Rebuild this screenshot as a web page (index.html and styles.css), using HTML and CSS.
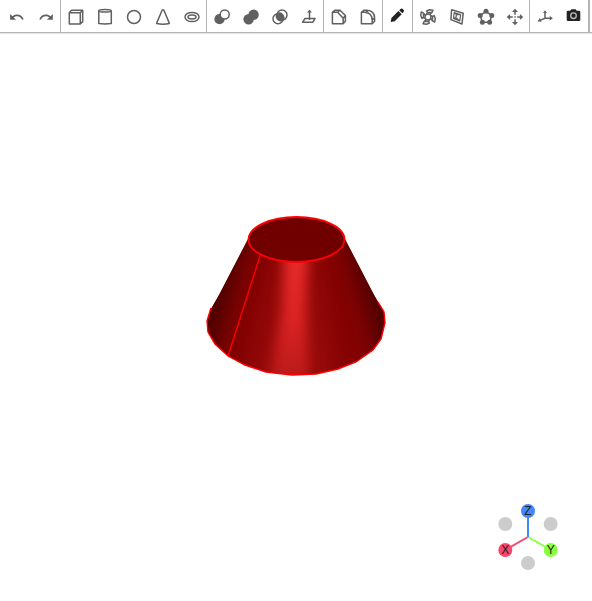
FILE: index.html
```html
<!DOCTYPE html>
<html lang="en">
<head>
<meta charset="utf-8">
<title>Solid modeler</title>
<link rel="stylesheet" href="styles.css">
</head>
<body>
<header class="toolbar" role="toolbar" aria-label="Modeling tools">
  <div class="group">
    <button class="tool" type="button" aria-label="Undo"><svg viewBox="0 0 29 32"><path class="solid" transform="translate(6.8 9.3) scale(.66)" d="M12.5 8c-2.65 0-5.05.99-6.9 2.6L2 7v9h9l-3.62-3.62c1.39-1.16 3.16-1.88 5.12-1.88 3.54 0 6.55 2.31 7.6 5.5l2.37-.78C21.08 11.03 17.15 8 12.5 8z"/></svg></button>
    <button class="tool" type="button" aria-label="Redo"><svg viewBox="0 0 29 32"><path class="solid" transform="translate(7.3 9.3) scale(.66)" d="M18.4 10.6C16.55 8.99 14.15 8 11.5 8c-4.65 0-8.58 3.03-9.96 7.22L3.9 16c1.05-3.19 4.05-5.5 7.6-5.5 1.95 0 3.73.72 5.12 1.88L13 16h9V7l-3.6 3.6z"/></svg></button>
  </div>
  <div class="group">
    <button class="tool" type="button" aria-label="Box"><svg viewBox="0 0 29 32"><path class="line" d="M8.3 12.7H19.3V24H8.3ZM8.3 12.7 10.5 10.3H21.7V21.6L19.3 24M19.3 12.7 21.7 10.3"/></svg></button>
    <button class="tool" type="button" aria-label="Cylinder"><svg viewBox="0 0 29 32"><path class="line" d="M8.8 10.8V23.6Q15 24.4 21.3 23.6V10.8"/><ellipse class="line" cx="15" cy="10.8" rx="6.3" ry="1.3"/></svg></button>
    <button class="tool" type="button" aria-label="Sphere"><svg viewBox="0 0 29 32"><circle class="line" cx="15" cy="17" r="6.5"/></svg></button>
    <button class="tool" type="button" aria-label="Cone"><svg viewBox="0 0 29 32"><path class="line" d="M14.2 10h1.6L21.4 23.4Q15 25 8.6 23.4Z"/></svg></button>
    <button class="tool" type="button" aria-label="Torus"><svg viewBox="0 0 29 32"><ellipse class="line" cx="15" cy="17" rx="7" ry="4.6"/><ellipse class="line" cx="15" cy="17" rx="4" ry="1.9"/></svg></button>
  </div>
  <div class="group">
    <button class="tool" type="button" aria-label="Subtract"><svg viewBox="0 0 29 32"><circle class="solid" cx="12.5" cy="19.2" r="5.1"/><circle class="line white" cx="17.7" cy="14.5" r="4.5"/></svg></button>
    <button class="tool" type="button" aria-label="Union"><svg viewBox="0 0 29 32"><circle class="solid" cx="12.6" cy="19.2" r="5.2"/><circle class="solid" cx="17.6" cy="14.7" r="5.2"/></svg></button>
    <button class="tool" type="button" aria-label="Intersect"><svg viewBox="0 0 29 32"><path class="solid" d="M12.1 13A5 5 0 0 1 18.1 20.8A5 5 0 0 1 12.1 13Z"/><circle class="line" cx="13" cy="18.8" r="5"/><circle class="line" cx="17" cy="15.1" r="5"/></svg></button>
    <button class="tool" type="button" aria-label="Extrude"><svg viewBox="0 0 29 32"><path class="line" d="M11 18.5H21L18.7 22.3H8.5ZM15.5 20V12"/><path class="solid" d="m13.1 12.5 2.4-3 2.4 3z"/></svg></button>
  </div>
  <div class="group">
    <button class="tool" type="button" aria-label="Chamfer"><svg viewBox="0 0 29 32"><path class="line" d="M8.4 12.3h5.2l5.6 6v5.5H8.4ZM8.4 12.3l2.6-2.1h5l5.4 5.3v5.8l-2.2 2.5M13.6 12.3l2.4-2.1M19.2 18.3l2.2-2.8"/></svg></button>
    <button class="tool" type="button" aria-label="Fillet"><svg viewBox="0 0 29 32"><path class="line" d="M8.4 12.3h3.4q7.4.6 7.4 8v3.5H8.4ZM8.4 12.3l2.6-2.1h3q7.6.4 7.6 8v3.1l-2.4 2.5M12.8 12.3l2.4-2M19.2 20l2.4-2"/></svg></button>
  </div>
  <div class="group">
    <button class="tool" type="button" aria-label="Sketch"><svg viewBox="0 0 29 32"><path class="dark" d="m7.7 22 .7-4 7-7 3.3 3.3-7 7ZM16.2 10.2 17.8 8.8q.8-.7 1.6 0l1.3 1.3q.7.8 0 1.6l-1.4 1.5Z"/></svg></button>
  </div>
  <div class="group">
    <button class="tool" type="button" aria-label="Revolve"><svg viewBox="0 0 29 32"><circle class="line" cx="15" cy="17" r="3"/><g id="blade"><path class="line" d="M13.6 14.2 14.5 12.4 13.6 10.9 16.5 9.8 20 10.2 18.8 12.6 16.8 14.2M14.5 12.4 18.8 12.6"/></g><use href="#blade" transform="rotate(90 15 17)"/><use href="#blade" transform="rotate(180 15 17)"/><use href="#blade" transform="rotate(270 15 17)"/></svg></button>
    <button class="tool" type="button" aria-label="Offset"><svg viewBox="0 0 29 32"><path class="line" d="M9.6 9.8 21.2 13.2 20 24 8.9 19.6Z"/><path class="line thin" d="M12.2 12.6 18.7 14.7 17.8 20.9 11.5 18.4ZM14.4 14.6 18.7 14.7M14.4 14.6 13.9 17.6 17.8 20.9M14.4 14.6 12.2 12.6M13.9 17.6 11.5 18.4"/></svg></button>
    <button class="tool" type="button" aria-label="Polygon"><svg viewBox="0 0 29 32"><path class="line" d="M15 11.3 20.8 15.6 18.6 22.2H11.4L9.2 15.6Z"/><g class="solid"><circle cx="15" cy="11.2" r="2.5"/><circle cx="20.8" cy="15.6" r="2.5"/><circle cx="18.6" cy="22.2" r="2.5"/><circle cx="11.4" cy="22.2" r="2.5"/><circle cx="9.2" cy="15.6" r="2.5"/></g></svg></button>
    <button class="tool" type="button" aria-label="Move"><svg viewBox="0 0 29 32"><path class="line" d="M15 11.5v3.3M15 19.2v3.3M9.5 17h3.3M17.2 17h3.3"/><path class="solid" d="m15 8.8 3 3.3h-6ZM15 25.2l3-3.3h-6ZM6.8 17l3.3-3v6ZM23.2 17l-3.3-3v6ZM14.3 16.3h1.4v1.4h-1.4Z"/></svg></button>
  </div>
  <div class="group">
    <button class="tool" type="button" aria-label="Axes"><svg viewBox="0 0 29 32"><path class="line" d="M15 12v6.2h5.8M15 18.2l-5 2.2"/><path class="solid" d="m15 10.2 2 2.8h-4ZM22.9 18.2l-3.2 2.2v-4.4ZM7.5 21.4l2.3-3.4 1.8 3.8Z"/></svg></button>
    <button class="tool" type="button" aria-label="Snapshot"><svg viewBox="0 0 29 32"><path class="dark" d="M9 10.8h2.2l1.2-1.5h4.2l1.2 1.5H20q1.3 0 1.3 1.3v7.7q0 1.3-1.3 1.3H9q-1.3 0-1.3-1.3v-7.7q0-1.3 1.3-1.3Z"/><circle class="lens" cx="14.5" cy="15.7" r="2.8"/></svg></button>
  </div>
</header>
<main class="viewport">
  <svg class="model" viewBox="196 207 200 220" role="img" aria-label="Truncated cone">
    <defs>
      <clipPath id="side"><path d="M248 239 219 295 211 309 207 321 208 332 215 344 228 356 245 365 266 372 292 375 316 374 338 369 356 362 373 350 381 339 385 323 384 312 378 302 373 293 345 239Z"/></clipPath>
      <filter id="soft" x="-50%" y="-20%" width="200%" height="140%" color-interpolation-filters="sRGB"><feGaussianBlur stdDeviation="11 2"/></filter>
      <filter id="glow" x="-60%" y="-20%" width="220%" height="140%" color-interpolation-filters="sRGB"><feGaussianBlur stdDeviation="6 3"/></filter>
      <linearGradient id="shine" x1="0" y1="0" x2="0" y2="1"><stop offset="0" stop-color="#ec2c2c"/><stop offset=".5" stop-color="#dc2424"/><stop offset="1" stop-color="#b41818"/></linearGradient>
    </defs>
    <g clip-path="url(#side)">
      <path fill="#840303" d="M200 230H392V380H200Z"/>
      <path class="shade" d="M170 220H253L206 385H170Z"/>
      <path class="shade" d="M420 220H340L389 385H420Z"/>
      <path class="halo" d="M280 240H312L340 390H246Z"/>
      <path class="shine" d="M285 240H308L306 310 310 390H268L282 310Z"/>
    </g>
    <path class="edge" d="M211 308 207 321 208 332 215 344 228 356 245 365 266 372 292 375 316 374 338 369 356 362 373 350 381 339 385 323 384 312 378 302"/>
    <path class="edge seam" d="M260 256 228 356"/>
    <ellipse class="cap" cx="296.5" cy="239.5" rx="48" ry="22.5"/>
  </svg>
  <svg class="gizmo" viewBox="488 492 80 90" role="img" aria-label="View orientation">
    <g class="back"><circle cx="505.3" cy="524" r="7"/><circle cx="550.7" cy="524" r="7"/><circle cx="528" cy="563" r="7"/></g>
    <path class="axis x" d="M528 537 505 550"/><path class="axis y" d="M528 537 551 550"/><path class="axis z" d="M528 537V511"/>
    <circle class="x" cx="505.3" cy="550" r="7"/><circle class="y" cx="550.7" cy="550" r="7"/><circle class="z" cx="528" cy="511" r="7"/>
    <text x="505.3" y="554">X</text><text x="550.7" y="554">Y</text><text x="528" y="515">Z</text>
  </svg>
</main>
</body>
</html>
```
FILE: styles.css
```css
* { box-sizing: border-box; }
body {
  margin: 0;
  min-height: 100vh;
  display: flex;
  flex-direction: column;
  overflow: hidden;
  background: #fff;
  font-family: "Liberation Sans", Arial, sans-serif;
}
.toolbar {
  display: flex;
  padding-left: 2px;
  border-bottom: 1px solid #b4b4b4;
  box-shadow: 0 1px 1px #e8e8e8;
}
.group {
  display: flex;
  border-right: 1px solid #b4b4b4;
}
.group:last-child { border-right: 2px solid #b4b4b4; }
.tool {
  padding: 0;
  border: 0;
  background: none;
}
.tool svg {
  display: block;
  width: 29px;
  height: 32px;
}
.solid { fill: #606060; }
.dark { fill: #222; }
.line {
  fill: none;
  stroke: #606060;
  stroke-width: 1.5;
  stroke-linejoin: round;
}
.thin { stroke-width: 1.2; }
.white { fill: #fff; }
.lens { fill: #222; stroke: #bbb; stroke-width: 1.3; }
.viewport {
  position: relative;
  flex: 1;
  display: flex;
  align-items: center;
  justify-content: center;
}
.model { width: 200px; height: 220px; }
.shade { fill: #4c0000; filter: url(#soft); }
.halo { fill: #a00e0e; opacity: 0.7; filter: url(#soft); }
.shine { fill: url(#shine); filter: url(#glow); }
.edge { fill: none; stroke: #f00; stroke-width: 1.4; }
.seam { stroke-width: 1.3; }
.cap { fill: #700000; stroke: #f00; stroke-width: 1.8; }
.gizmo {
  position: absolute;
  right: 24px;
  bottom: 19px;
  width: 80px;
  height: 90px;
}
.gizmo text { font-size: 12px; text-anchor: middle; fill: #222; }
.back { fill: #ccc; }
.axis { stroke-width: 2; }
.x { fill: #f8476a; stroke: #f8476a; }
.y { fill: #8aff3d; stroke: #8aff3d; }
.z { fill: #4488ff; stroke: #4488ff; }
circle.x, circle.y, circle.z { stroke: none; }
```
